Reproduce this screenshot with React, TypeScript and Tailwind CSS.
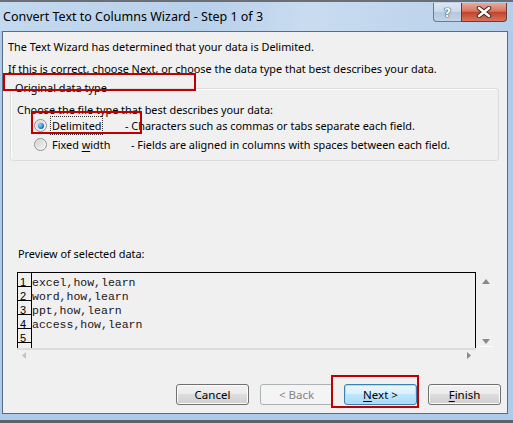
import React from 'react';

const rows = ['excel,how,learn', 'word,how,learn', 'ppt,how,learn', 'access,how,learn', ''];

function Radio({ checked }: { checked?: boolean }) {
  return (
    <span className="relative flex h-[13px] w-[13px] shrink-0 items-center justify-center rounded-full border border-[#8f8f8f] bg-gradient-to-br from-[#e4e4e4] to-[#fbfbfb]">
      <span className="flex h-[9px] w-[9px] items-center justify-center rounded-full bg-gradient-to-br from-[#d0d0d0] to-[#f5f5f5]">
        {checked && (
          <span className="h-[6px] w-[6px] rounded-full bg-[radial-gradient(circle_at_35%_35%,#9fd6ff,#1f7ad0_60%,#0f4e8a)]" />
        )}
      </span>
    </span>
  );
}

function Btn({ label, u, disabled, primary }: { label: string; u?: string; disabled?: boolean; primary?: boolean }) {
  const rest = u ? label.slice(u.length) : label;
  return (
    <button
      className={`relative flex h-[21px] w-[73px] items-center justify-center rounded-[3px] border text-[11.5px] leading-none ${
        disabled
          ? 'border-[#adb2b5] bg-[#f4f4f4] text-[#838383]'
          : primary
          ? 'border-[#3c7fb1] bg-[linear-gradient(#eaf6fd_0%,#d9f0fc_45%,#bee6fd_50%,#a7d9f5_100%)] text-black shadow-[inset_0_0_0_1px_#a6e2f8]'
          : 'border-[#707070] bg-[linear-gradient(#f2f2f2_0%,#ebebeb_45%,#dddddd_50%,#cfcfcf_100%)] text-black shadow-[inset_0_0_0_1px_#fcfcfc]'
      }`}
    >
      {u && <span className="underline underline-offset-2">{u}</span>}
      {rest}
    </button>
  );
}

export default function App() {
  return (
    <div className="relative flex h-[423px] w-[513px] flex-col overflow-hidden bg-[#aecbeb] font-['Noto_Sans',sans-serif] text-black">
      {/* top strip from the window behind */}
      <div className="h-[2px] bg-[#6b6f75]" />

      {/* title bar */}
      <div className="flex h-[29px] items-start bg-[linear-gradient(100deg,#c3d9ef_0%,#b8d0ea_40%,#c9dcf0_60%,#b6cfe9_100%)]">
        <div className="pl-[3px] pt-[7px] text-[12.5px] leading-[16px]">Convert Text to Columns Wizard - Step 1 of 3</div>
        <div className="ml-auto mr-[6px] mt-[1px] flex h-[19px]">
          <div className="flex w-[28px] items-center justify-center rounded-bl-[4px] border border-r-0 border-t-0 border-[#6b7a8e] bg-[linear-gradient(#dde7f2_0%,#c9d8e8_50%,#b4c7dc_52%,#c4d4e6_100%)]">
            <span className="font-['DejaVu_Sans',sans-serif] text-[13px] font-bold leading-none text-white [text-shadow:0_0_1px_#34465c,0_0_1px_#34465c,0_0_1px_#34465c]">?</span>
          </div>
          <div className="flex w-[46px] items-center justify-center rounded-br-[4px] border border-t-0 border-[#6b3a32] bg-[linear-gradient(#eaa898_0%,#d9765f_45%,#c3432c_52%,#d8735c_100%)]">
            <svg width="16" height="12" viewBox="0 0 16 12">
              <path d="M3 2 L13 10 M13 2 L3 10" stroke="#3b1f1a" strokeWidth="4.4" strokeLinecap="round" />
              <path d="M3 2 L13 10 M13 2 L3 10" stroke="#ffffff" strokeWidth="2.6" strokeLinecap="round" />
            </svg>
          </div>
        </div>
      </div>

      {/* client area */}
      <div className="ml-[2px] mr-[5px] flex h-[383px] flex-col border border-[#5b6c80] bg-[#f0f0f0] text-[10.9px] leading-[15px]">
        <p className="mt-[7px] pl-[5px]">The Text Wizard has determined that your data is Delimited.</p>
        <p className="mt-[7px] pl-[5px]">If this is correct, choose Next, or choose the data type that best describes your data.</p>

        <fieldset className="ml-[7px] mt-[5px] h-[80px] w-[489px] rounded-[3px] border border-[#dcdcdc] pl-[6px] shadow-[inset_1px_1px_0_#fff]">
          <legend className="-ml-[5px] px-[3px] leading-[14px]">Original data type</legend>
          <div className="mt-[7px] h-[14px]">Choose the file type that best describes your data:</div>
          <div className="flex h-[19px] items-center pl-[17px]">
            <Radio checked />
            <span className="ml-[3px] w-[75px]">
              <span className="border border-dotted border-[#333] px-[1px] py-[1px]">
                <span className="underline underline-offset-2">D</span>elimited
              </span>
            </span>
            <span>- Characters such as commas or tabs separate each field.</span>
          </div>
          <div className="flex h-[19px] items-center pl-[17px]">
            <Radio />
            <span className="ml-[5px] w-[79px]">
              Fixed <span className="underline underline-offset-2">w</span>idth
            </span>
            <span>- Fields are aligned in columns with spaces between each field.</span>
          </div>
        </fieldset>

        <div className="mt-[85px] pl-[15px]">Preview of selected data:</div>

        {/* preview */}
        <div className="ml-[14px] mt-[11px] flex w-[480px] flex-col">
          <div className="flex">
            <div className="flex h-[76px] w-[459px] border border-b-0 border-black font-['Liberation_Mono',monospace] text-[11.5px]">
              <div className="flex w-[14px] flex-col border-r border-black font-['Liberation_Sans',sans-serif] text-[11px]">
                {rows.map((_, i) => (
                  <div key={i} className="flex h-[14px] items-end border-b border-black pl-[2px] leading-[8px]">
                    {i + 1}
                  </div>
                ))}
              </div>
              <div className="flex flex-col">
                {rows.map((r, i) => (
                  <div key={i} className="flex h-[14px] items-end leading-[9px] text-[#1a1418]">
                    {r}
                  </div>
                ))}
              </div>
            </div>
            <div className="flex w-[19px] flex-col items-center justify-between pb-[1px] pt-[7px]">
              <svg width="8" height="5" viewBox="0 0 8 5">
                <path d="M0 5 L4 0 L8 5 Z" fill="#8a8a8a" />
              </svg>
              <div className="flex flex-col items-center">
                <svg width="8" height="5" viewBox="0 0 8 5">
                  <path d="M0 0 L8 0 L4 5 Z" fill="#8a8a8a" />
                </svg>
                <div className="mt-[2px] h-[1px] w-[14px] bg-white" />
              </div>
            </div>
          </div>
          <div className="flex h-[13px] w-[459px] items-center justify-between border-t-2 border-[#dcdcdc] pl-[5px] pr-[5px]">
            <svg width="4" height="7" viewBox="0 0 4 7">
              <path d="M4 0 L0 3.5 L4 7 Z" fill="#c4c4c4" />
            </svg>
            <svg width="4" height="7" viewBox="0 0 4 7">
              <path d="M0 0 L4 3.5 L0 7 Z" fill="#8a8a8a" />
            </svg>
          </div>
        </div>

        <div className="mb-[8px] mt-auto flex justify-end gap-[11px] pr-[6px]">
          <Btn label="Cancel" />
          <Btn label="< Back" disabled />
          <Btn label="Next >" u="N" primary />
          <Btn label="Finish" u="F" />
        </div>
      </div>

      <div className="h-[6px]" />
      <div className="flex-1 bg-[#5e6266]" />

      {/* annotation boxes */}
      <div className="absolute left-[3px] top-[73px] h-[18px] w-[193px] border-2 border-[#c00000]" />
      <div className="absolute left-[31px] top-[111px] h-[23px] w-[111px] border-2 border-[#c00000]" />
      <div className="absolute left-[331px] top-[375px] h-[33px] w-[88px] border-2 border-[#c00000]" />
    </div>
  );
}
